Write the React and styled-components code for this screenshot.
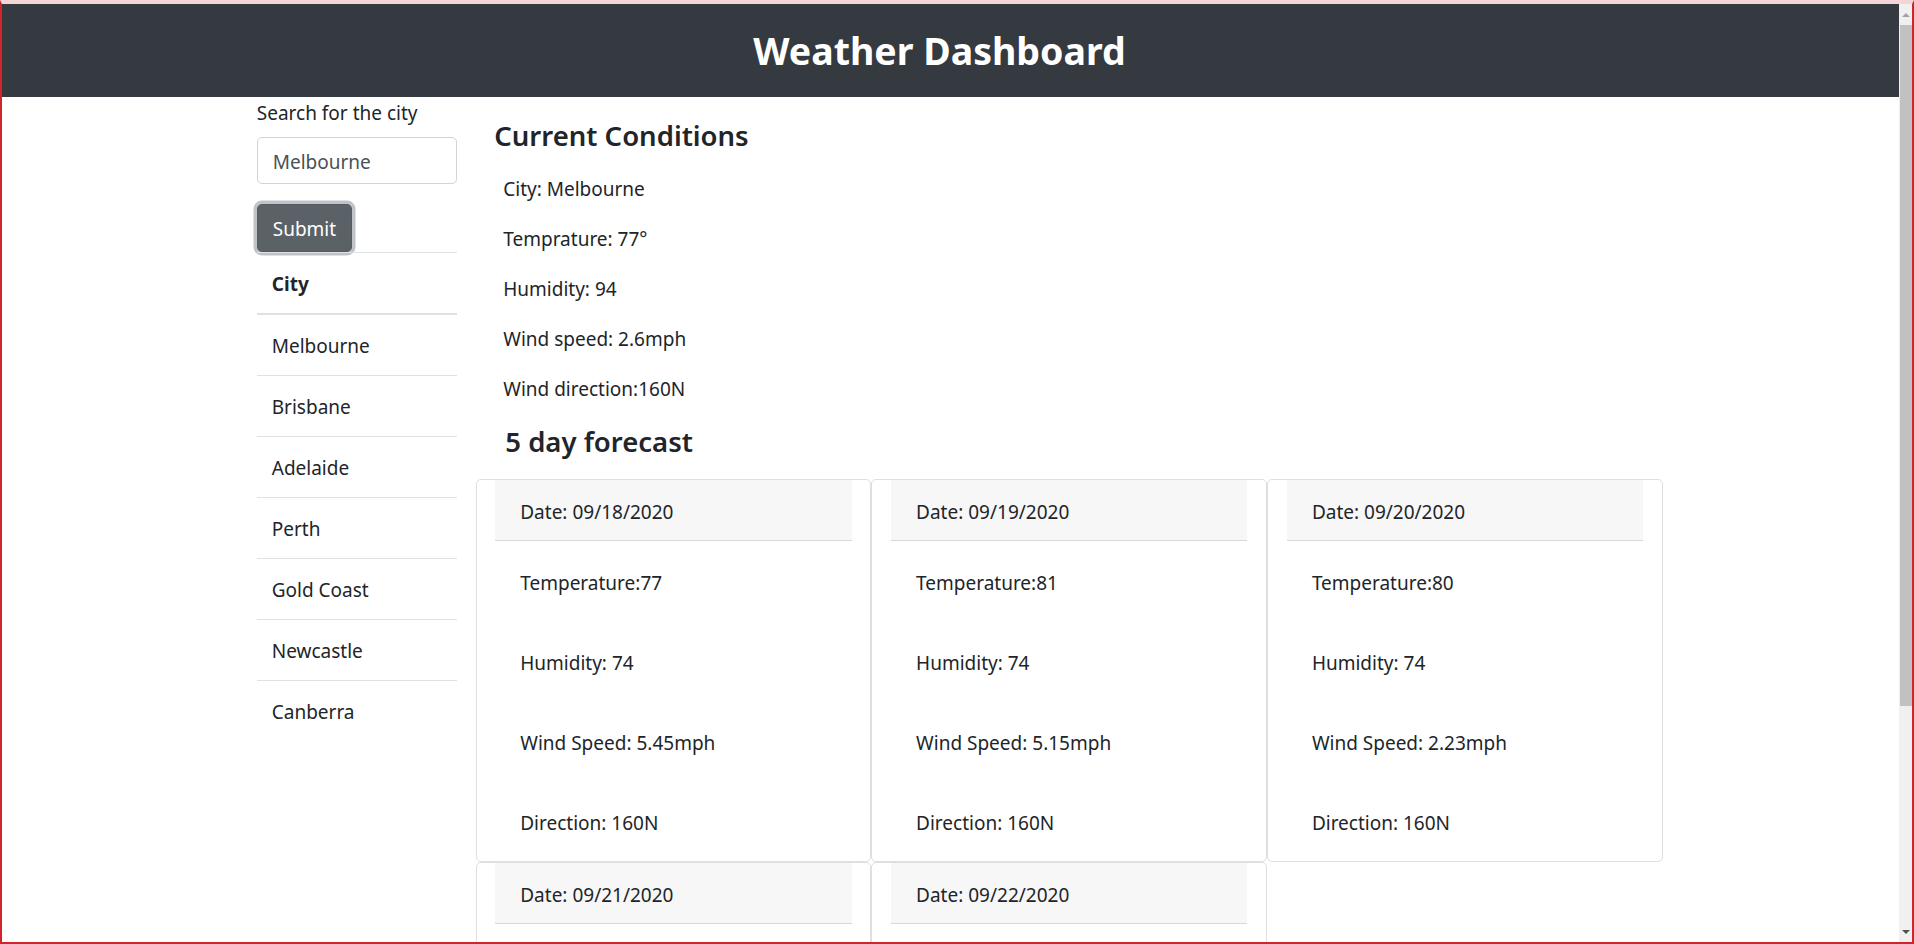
import React from "react";
import styled, { createGlobalStyle } from "styled-components";

const GlobalStyle = createGlobalStyle`
  * { box-sizing: border-box; }
  html, body { margin: 0; height: 100%; overflow: hidden; }
  body {
    font-family: "Noto Sans", "Open Sans", sans-serif;
    font-size: 19px;
    line-height: 30px;
    color: #212529;
    background: #fff;
  }
`;

const Frame = styled.div`
  height: 100vh;
  display: flex;
  border: 2px solid #d1242b;
  border-top: 4px solid #f3d5d6;
`;

const Page = styled.div`
  flex: 1;
  min-width: 0;
  overflow: hidden;
`;

const Header = styled.header`
  height: 93px;
  background: #343a40;
  display: flex;
  align-items: center;
  justify-content: center;
  padding-right: 22px;
`;

const Title = styled.h1`
  margin: 0;
  color: #fff;
  font-size: 37.5px;
  font-weight: 700;
  line-height: 1.2;
`;

const Container = styled.div`
  width: 1425px;
  margin: 0 auto;
  padding: 0 18.75px;
`;

const Row = styled.div`
  display: flex;
  margin: 0 -18.75px;
`;

const Sidebar = styled.aside`
  flex: 0 0 16.6667%;
  padding: 0 18.75px;
`;

const Main = styled.main`
  flex: 0 0 83.3333%;
  padding: 0 18.75px;
`;

const Label = styled.label`
  display: block;
  padding-top: 1px;
  margin-bottom: 9px;
`;

const FormGroup = styled.div`
  margin-bottom: 20px;
`;

const Input = styled.input`
  display: block;
  width: 100%;
  height: 47px;
  padding: 8px 15px 6px;
  border: 1px solid #ced4da;
  border-radius: 5px;
  font: inherit;
  color: #495057;
  outline: none;
`;

const SubmitButton = styled.button`
  display: block;
  height: 48px;
  padding: 2px 15px 0;
  background: #5a6268;
  border: 1px solid #545b62;
  border-radius: 5px;
  color: #fff;
  font: inherit;
  box-shadow: 0 0 0 3.5px rgba(130, 138, 145, 0.5);
  cursor: pointer;
`;

const CityTable = styled.table`
  width: 100%;
  border-collapse: collapse;
`;

const HeadCell = styled.th`
  text-align: left;
  font-weight: 700;
  padding: 16px 15px 14px;
  border-top: 1px solid #dee2e6;
  border-bottom: 2px solid #dee2e6;
`;

const Cell = styled.td`
  padding: 16px 15px 14px;
  border-top: 1px solid #dee2e6;
`;

const SectionTitle = styled.h4`
  font-size: ${(p) => p.$size}px;
  font-weight: 600;
  line-height: 36px;
  margin: ${(p) => p.$margin};
  padding-left: ${(p) => p.$indent}px;
`;

const Conditions = styled.div`
  padding-left: 9px;
`;

const Line = styled.p`
  margin: 0 0 20px;
`;

const CardGrid = styled.div`
  display: flex;
  flex-wrap: wrap;
  margin: 0 -18.75px;
`;

const Card = styled.div`
  flex: 0 0 33.3333%;
  padding: 0 18.75px;
  border: 1px solid rgba(0, 0, 0, 0.125);
  border-radius: 5px;
`;

const CardHeader = styled.div`
  padding: 17px 25px 13px;
  background: rgba(0, 0, 0, 0.03);
  border-bottom: 1px solid rgba(0, 0, 0, 0.125);
`;

const CardBody = styled.div`
  padding: 27px 25px 23px;
  display: flex;
  flex-direction: column;
  gap: 50px;
`;

const ScrollTrack = styled.div`
  width: 13px;
  flex: 0 0 13px;
  background: #f0f0f0;
  display: flex;
  flex-direction: column;
`;

const ScrollArrow = styled.div`
  height: 21px;
  display: flex;
  align-items: center;
  justify-content: center;
  &::before {
    content: "";
    border-left: 4px solid transparent;
    border-right: 4px solid transparent;
    ${(p) =>
      p.$down
        ? "border-top: 4px solid #505050;"
        : "border-bottom: 4px solid #a3a3a3;"}
  }
`;

const ScrollThumb = styled.div`
  height: 681px;
  margin: 0 0 0 1px;
  background: #c1c1c1;
`;

const ScrollSpace = styled.div`
  flex: 1;
`;

const cities = [
  "Melbourne",
  "Brisbane",
  "Adelaide",
  "Perth",
  "Gold Coast",
  "Newcastle",
  "Canberra",
];

const forecast = [
  { date: "09/18/2020", temp: 77, hum: 74, wind: "5.45", dir: "160N" },
  { date: "09/19/2020", temp: 81, hum: 74, wind: "5.15", dir: "160N" },
  { date: "09/20/2020", temp: 80, hum: 74, wind: "2.23", dir: "160N" },
  { date: "09/21/2020", temp: 79, hum: 74, wind: "3.6", dir: "160N" },
  { date: "09/22/2020", temp: 78, hum: 74, wind: "4.1", dir: "160N" },
];

export default function App() {
  return (
    <>
      <GlobalStyle />
      <Frame>
        <Page>
          <Header>
            <Title>Weather Dashboard</Title>
          </Header>
          <Container>
            <Row>
              <Sidebar>
                <Label htmlFor="city">Search for the city</Label>
                <FormGroup>
                  <Input id="city" defaultValue="Melbourne" />
                </FormGroup>
                <SubmitButton>Submit</SubmitButton>
                <CityTable>
                  <thead>
                    <tr>
                      <HeadCell>City</HeadCell>
                    </tr>
                  </thead>
                  <tbody>
                    {cities.map((c) => (
                      <tr key={c}>
                        <Cell>{c}</Cell>
                      </tr>
                    ))}
                  </tbody>
                </CityTable>
              </Sidebar>
              <Main>
                <SectionTitle $size={27.5} $margin="21px 0 20px" $indent={0}>
                  Current Conditions
                </SectionTitle>
                <Conditions>
                  <Line>City: Melbourne</Line>
                  <Line>Temprature: 77°</Line>
                  <Line>Humidity: 94</Line>
                  <Line>Wind speed: 2.6mph</Line>
                  <Line>Wind direction:160N</Line>
                </Conditions>
                <SectionTitle $size={27.5} $margin="0 0 19px" $indent={11}>
                  5 day forecast
                </SectionTitle>
                <CardGrid>
                  {forecast.map((f) => (
                    <Card key={f.date}>
                      <CardHeader>Date: {f.date}</CardHeader>
                      <CardBody>
                        <div>Temperature:{f.temp}</div>
                        <div>Humidity: {f.hum}</div>
                        <div>Wind Speed: {f.wind}mph</div>
                        <div>Direction: {f.dir}</div>
                      </CardBody>
                    </Card>
                  ))}
                </CardGrid>
              </Main>
            </Row>
          </Container>
        </Page>
        <ScrollTrack>
          <ScrollArrow />
          <ScrollThumb />
          <ScrollSpace />
          <ScrollArrow $down />
        </ScrollTrack>
      </Frame>
    </>
  );
}
